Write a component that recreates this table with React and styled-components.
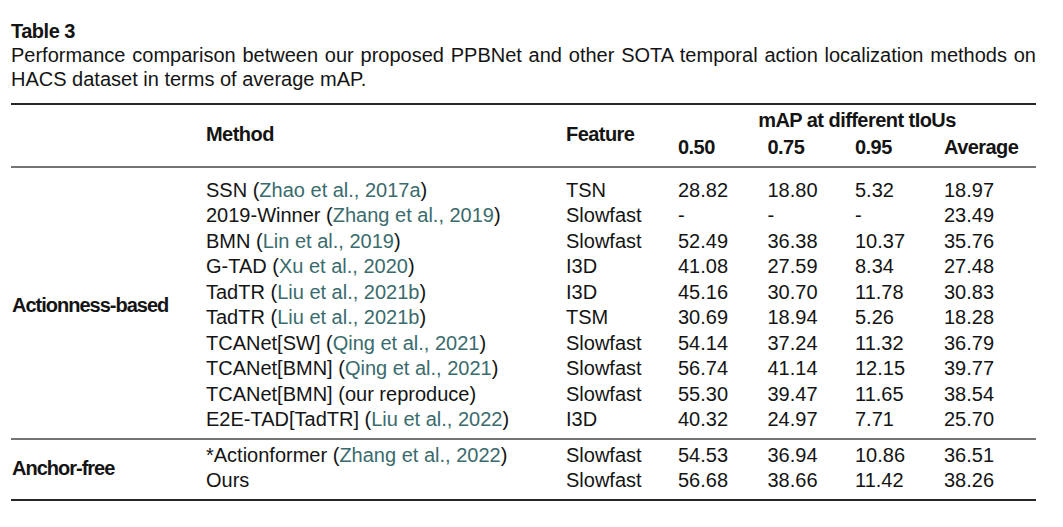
import React from "react";
import styled, { createGlobalStyle } from "styled-components";

const GlobalStyle = createGlobalStyle`
  html, body { margin: 0; padding: 0; background: #ffffff; }
  body {
    font-family: "Liberation Sans", Arial, sans-serif;
    color: #141414;
    -webkit-font-smoothing: antialiased;
  }
`;

const Page = styled.div`
  padding: 19px 0 0 11px;
  width: 1025px;
`;

const Caption = styled.div`
  font-size: 20px;
  line-height: 24px;
`;

const Title = styled.div`
  font-weight: 700;
  letter-spacing: -0.5px;
`;

const CaptionLine = styled.div`
  text-align: ${(p) => (p.$justify ? "justify" : "left")};
  text-align-last: ${(p) => (p.$justify ? "justify" : "auto")};
  white-space: nowrap;
`;

const Table = styled.div`
  margin-top: 12px;
  border-top: 2px solid #262626;
  border-bottom: 2px solid #262626;
  font-size: 20px;
`;

const COLS = "195px 360px 112px 89.5px 87.5px 89px 92px";
const ROW_COLS = "360px 112px 89.5px 87.5px 89px 92px";

const Header = styled.div`
  display: grid;
  grid-template-columns: ${COLS};
  grid-template-rows: 26.6px 26.6px;
  padding: 3px 0 4.5px;
  border-bottom: 2px solid #747474;
  line-height: 25.5px;
  font-weight: 700;
  letter-spacing: -0.55px;
`;

const HeadCell = styled.div`
  grid-column: ${(p) => p.$col};
  grid-row: ${(p) => p.$row};
  align-self: ${(p) => (p.$center ? "center" : "start")};
  text-align: ${(p) => (p.$centerText ? "center" : "left")};
  white-space: nowrap;
`;

const Group = styled.div`
  display: flex;
  padding: ${(p) => p.$padTop}px 0 ${(p) => p.$padBottom}px;
  border-bottom: ${(p) => (p.$rule ? "2px solid #747474" : "none")};
`;

const Category = styled.div`
  width: 195px;
  flex: none;
  display: flex;
  align-items: center;
  padding-left: 1px;
  box-sizing: border-box;
  font-weight: 700;
  letter-spacing: -1px;
  white-space: nowrap;
`;

const RowList = styled.div`
  display: flex;
  flex-direction: column;
`;

const Row = styled.div`
  display: grid;
  grid-template-columns: ${ROW_COLS};
  height: 25.5px;
  line-height: 25.5px;
  white-space: nowrap;
`;

const Cell = styled.div`
  white-space: nowrap;
`;

const Cite = styled.span`
  color: #3a6b6d;
`;

const groups = [
  {
    name: "Actionness-based",
    padTop: 10,
    padBottom: 5,
    rule: true,
    rows: [
      ["SSN", "Zhao et al., 2017a", "TSN", "28.82", "18.80", "5.32", "18.97"],
      ["2019-Winner", "Zhang et al., 2019", "Slowfast", "-", "-", "-", "23.49"],
      ["BMN", "Lin et al., 2019", "Slowfast", "52.49", "36.38", "10.37", "35.76"],
      ["G-TAD", "Xu et al., 2020", "I3D", "41.08", "27.59", "8.34", "27.48"],
      ["TadTR", "Liu et al., 2021b", "I3D", "45.16", "30.70", "11.78", "30.83"],
      ["TadTR", "Liu et al., 2021b", "TSM", "30.69", "18.94", "5.26", "18.28"],
      ["TCANet[SW]", "Qing et al., 2021", "Slowfast", "54.14", "37.24", "11.32", "36.79"],
      ["TCANet[BMN]", "Qing et al., 2021", "Slowfast", "56.74", "41.14", "12.15", "39.77"],
      ["TCANet[BMN] (our reproduce)", null, "Slowfast", "55.30", "39.47", "11.65", "38.54"],
      ["E2E-TAD[TadTR]", "Liu et al., 2022", "I3D", "40.32", "24.97", "7.71", "25.70"],
    ],
  },
  {
    name: "Anchor-free",
    padTop: 3,
    padBottom: 5,
    rule: false,
    rows: [
      ["*Actionformer", "Zhang et al., 2022", "Slowfast", "54.53", "36.94", "10.86", "36.51"],
      ["Ours", null, "Slowfast", "56.68", "38.66", "11.42", "38.26"],
    ],
  },
];

export default function App() {
  return (
    <>
      <GlobalStyle />
      <Page>
        <Caption>
          <Title>Table 3</Title>
          <CaptionLine $justify>
            Performance comparison between our proposed PPBNet and other SOTA temporal action localization methods on
          </CaptionLine>
          <CaptionLine>HACS dataset in terms of average mAP.</CaptionLine>
        </Caption>
        <Table>
          <Header>
            <HeadCell $col="2" $row="1 / 3" $center>Method</HeadCell>
            <HeadCell $col="3" $row="1 / 3" $center>Feature</HeadCell>
            <HeadCell $col="4 / 8" $row="1" $centerText>mAP at different tIoUs</HeadCell>
            <HeadCell $col="4" $row="2">0.50</HeadCell>
            <HeadCell $col="5" $row="2">0.75</HeadCell>
            <HeadCell $col="6" $row="2">0.95</HeadCell>
            <HeadCell $col="7" $row="2">Average</HeadCell>
          </Header>
          {groups.map((g) => (
            <Group key={g.name} $padTop={g.padTop} $padBottom={g.padBottom} $rule={g.rule}>
              <Category>{g.name}</Category>
              <RowList>
                {g.rows.map((r, i) => (
                  <Row key={i}>
                    <Cell>
                      {r[0]}
                      {r[1] && (
                        <>
                          {" "}
                          (<Cite>{r[1]}</Cite>)
                        </>
                      )}
                    </Cell>
                    <Cell>{r[2]}</Cell>
                    <Cell>{r[3]}</Cell>
                    <Cell>{r[4]}</Cell>
                    <Cell>{r[5]}</Cell>
                    <Cell>{r[6]}</Cell>
                  </Row>
                ))}
              </RowList>
            </Group>
          ))}
        </Table>
      </Page>
    </>
  );
}
